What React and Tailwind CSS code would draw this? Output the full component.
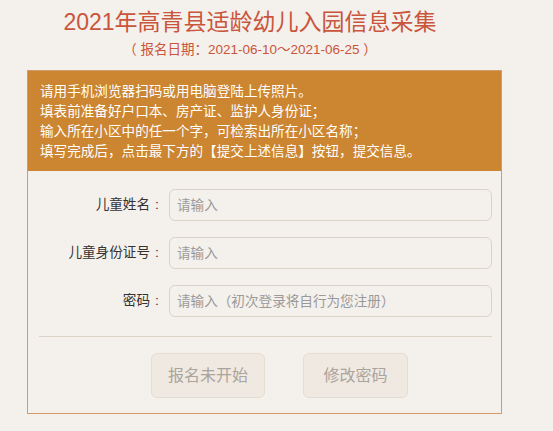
export default function App() {
  const font = { fontFamily: '"Liberation Sans", "Noto Sans CJK SC", sans-serif' };

  const fields = [
    { label: "儿童姓名", placeholder: "请输入" },
    { label: "儿童身份证号", placeholder: "请输入" },
    { label: "密码", placeholder: "请输入（初次登录将自行为您注册）" },
  ];

  return (
    <div className="min-h-screen bg-[#f4f0eb] font-['Liberation_Sans','Noto_Sans_CJK_SC',sans-serif]">
      {/* Title */}
      <div className="w-[500px] text-center pt-[5px]">
        <h1 className="text-[23px] leading-[34px] text-[#c9553c]">2021年高青县适龄幼儿入园信息采集</h1>
        <p className="text-[13.5px] leading-[20px] mt-[1px] text-[#c9553c]">（ 报名日期：2021-06-10～2021-06-25 ）</p>
      </div>

      {/* Box */}
      <div className="ml-[27px] mt-[10px] w-[475px] border border-[#d49a6a]">
        <div className="bg-[#cc8530] text-white text-[13.6px] leading-[20px] px-[12px] pt-[11px] h-[100px]">
          <p>请用手机浏览器扫码或用电脑登陆上传照片。</p>
          <p>填表前准备好户口本、房产证、监护人身份证；</p>
          <p>输入所在小区中的任一个字，可检索出所在小区名称；</p>
          <p>填写完成后，点击最下方的【提交上述信息】按钮，提交信息。</p>
        </div>

        <div className="pl-[11px] pr-[9px] pt-[18px] pb-[15px]">
          <div className="flex flex-col gap-[16px]">
            {fields.map((f) => (
              <div key={f.label} className="flex items-center">
                <label className="w-[111px] text-right text-[13.6px] text-[#333]">{f.label}</label>
                <span className="w-[19px] pl-[5px] text-[13.6px] text-[#333]">:</span>
                <input
                  style={font}
                  placeholder={f.placeholder}
                  className="w-[323px] h-[32px] rounded-[6px] border border-[#dcd3c8] bg-[#f4f0eb] px-[7px] text-[13.6px] placeholder:text-[#9a9a9a] outline-none"
                />
              </div>
            ))}
          </div>

          <div className="mt-[19px] border-t border-[#dcd3c8]" />

          <div className="flex gap-[38px] pl-[112px] mt-[16px]">
            <button className="w-[114px] h-[45px] rounded-[6px] border border-[#e6ddd2] bg-[#f0e9e2] text-[16px] text-[#aaa49c]">
              报名未开始
            </button>
            <button className="w-[105px] h-[45px] rounded-[6px] border border-[#e6ddd2] bg-[#f0e9e2] text-[16px] text-[#aaa49c]">
              修改密码
            </button>
          </div>
        </div>
      </div>
    </div>
  );
}
